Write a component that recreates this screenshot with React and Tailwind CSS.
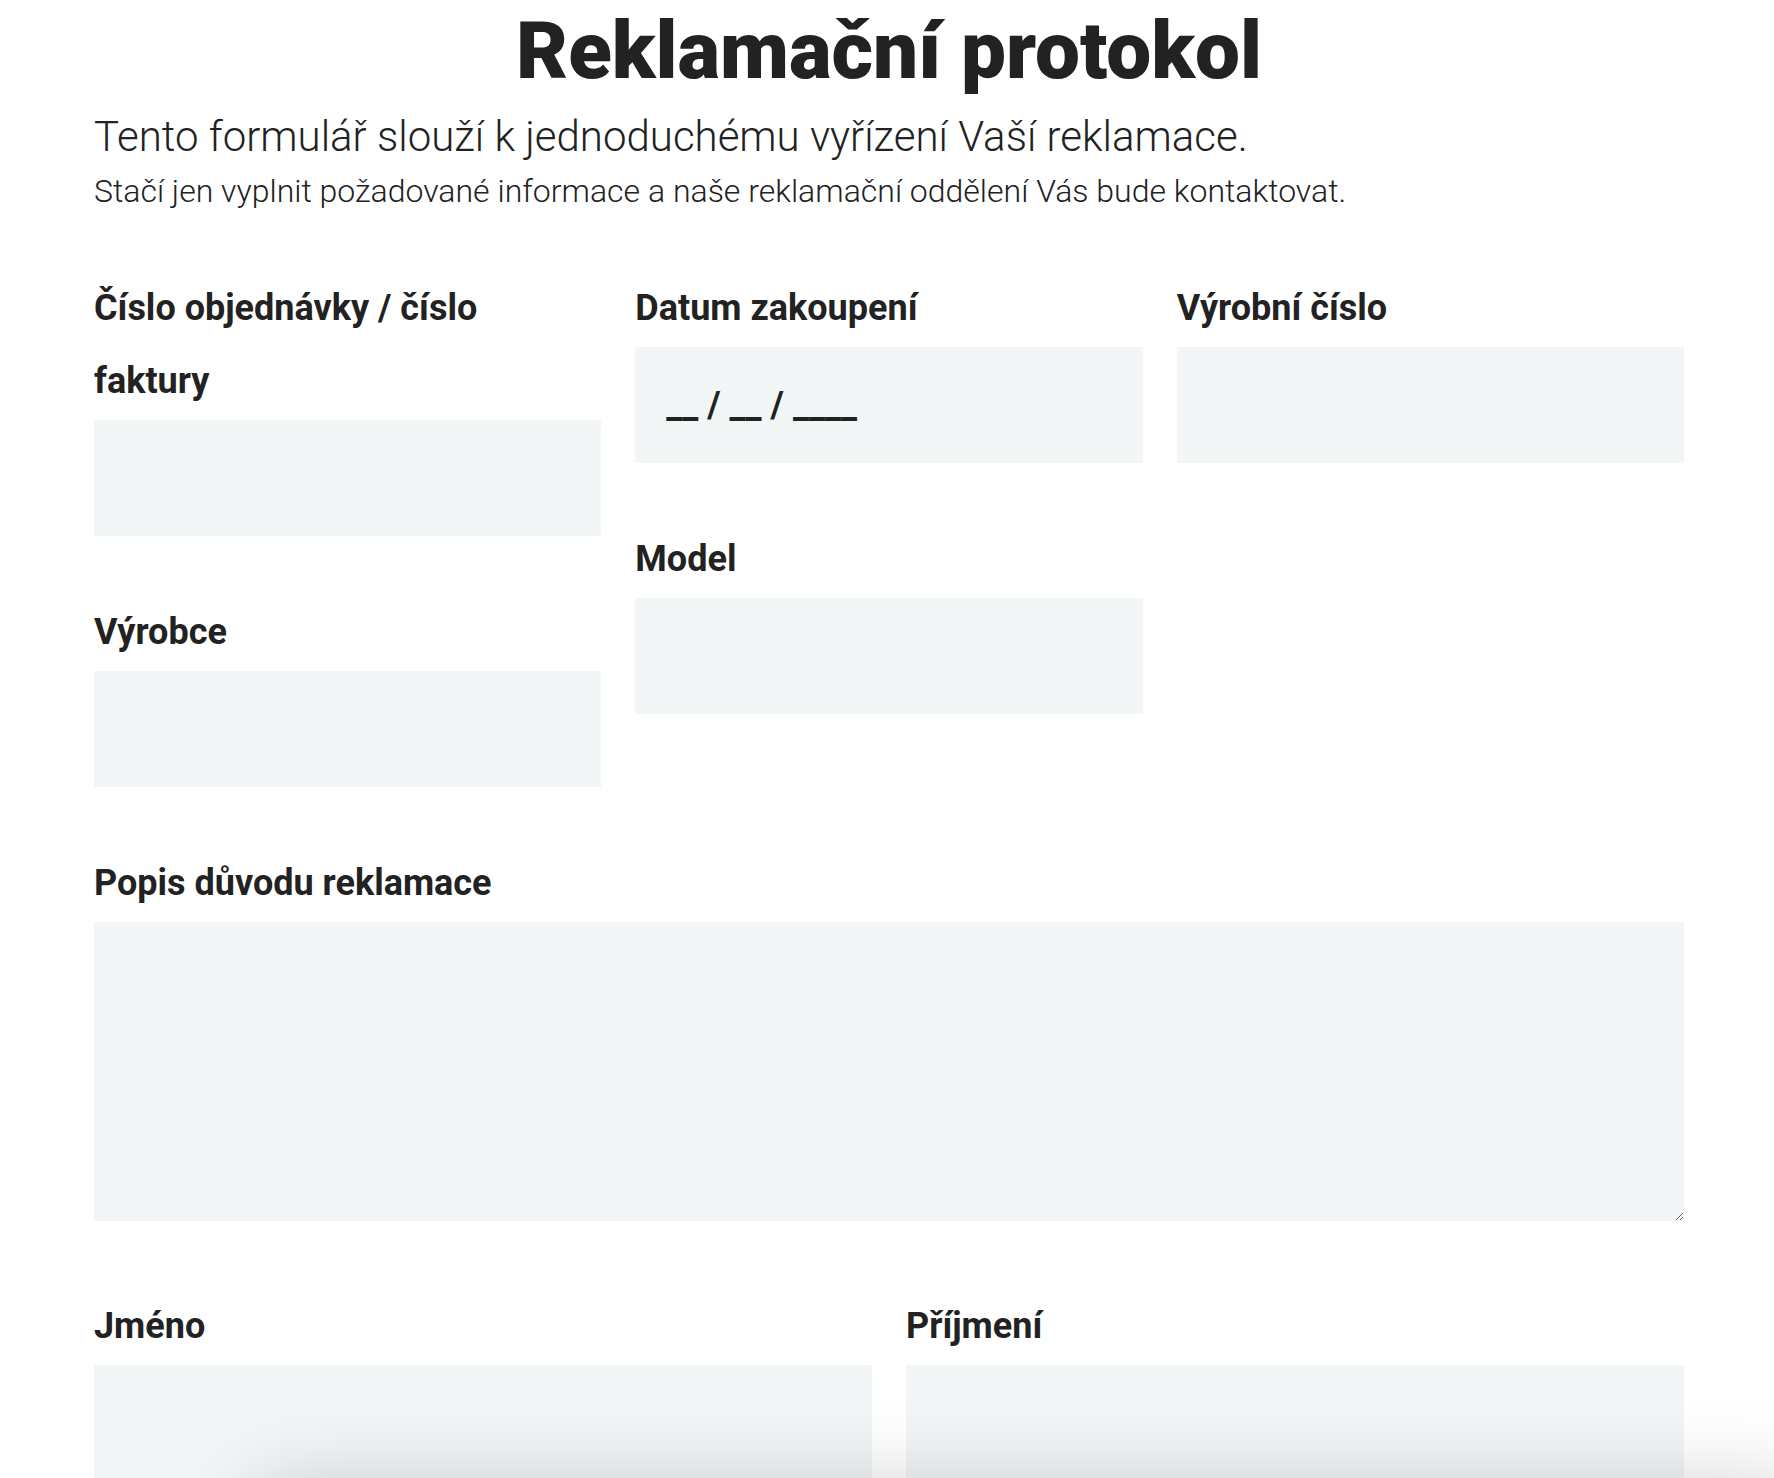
import { useState } from 'react';

const inputCls =
    'block w-full h-[116px] mt-0.5 bg-[#f3f6f7] px-[31px] text-[36px] font-bold text-[#222] outline-none placeholder:text-[#222]';

function Field({ label, id, placeholder }) {
    const [value, setValue] = useState('');
    return (
        <div className="mb-[60px]">
            <label htmlFor={id} className="block text-[36px] leading-[73px] font-bold text-[#222]">
                {label}
            </label>
            <input
                id={id}
                type="text"
                value={value}
                placeholder={placeholder}
                onChange={(e) => setValue(e.target.value)}
                className={inputCls}
            />
        </div>
    );
}

export default function App() {
    const [popis, setPopis] = useState('');

    return (
        <div className="relative h-[1478px] overflow-hidden bg-white text-[#222] font-['Roboto','Liberation_Sans',sans-serif]">
            <div className="pl-[94px] pr-[90px]">
                <h1 className="pt-[11px] text-center text-[80px] leading-[80px] font-black">
                    Reklamační protokol
                </h1>
                <p className="mt-[22px] text-[42px] leading-[48px] font-light">
                    Tento formulář slouží k jednoduchému vyřízení Vaší reklamace.
                </p>
                <p className="mt-[10px] text-[32px] leading-[40px] font-light">
                    Stačí jen vyplnit požadované informace a naše reklamační oddělení Vás bude kontaktovat.
                </p>

                <form className="mt-[61px]" onSubmit={(e) => e.preventDefault()}>
                    <div className="grid grid-cols-3 gap-x-[34px]">
                        <div>
                            <Field
                                id="cislo"
                                label={
                                    <>
                                        Číslo objednávky / číslo
                                        <br />
                                        faktury
                                    </>
                                }
                            />
                            <Field id="vyrobce" label="Výrobce" />
                        </div>
                        <div>
                            <Field id="datum" label="Datum zakoupení" placeholder="__ / __ / ____" />
                            <Field id="model" label="Model" />
                        </div>
                        <div>
                            <Field id="vyrobni" label="Výrobní číslo" />
                        </div>
                    </div>

                    <div className="mb-[69px]">
                        <label htmlFor="popis" className="block text-[36px] leading-[73px] font-bold">
                            Popis důvodu reklamace
                        </label>
                        <textarea
                            id="popis"
                            value={popis}
                            onChange={(e) => setPopis(e.target.value)}
                            className="block w-full h-[299px] mt-0.5 bg-[#f3f6f7] p-[31px] text-[36px] outline-none"
                        />
                    </div>

                    <div className="grid grid-cols-2 gap-x-[34px]">
                        <Field id="jmeno" label="Jméno" />
                        <Field id="prijmeni" label="Příjmení" />
                    </div>
                </form>
            </div>

            {/* floating bar below the fold, only its shadow shows */}
            <div className="absolute left-[250px] right-[-40px] top-[1488px] h-[200px] rounded-[30px] bg-white shadow-[0_0_90px_rgba(0,0,0,0.2)]" />
        </div>
    );
}
